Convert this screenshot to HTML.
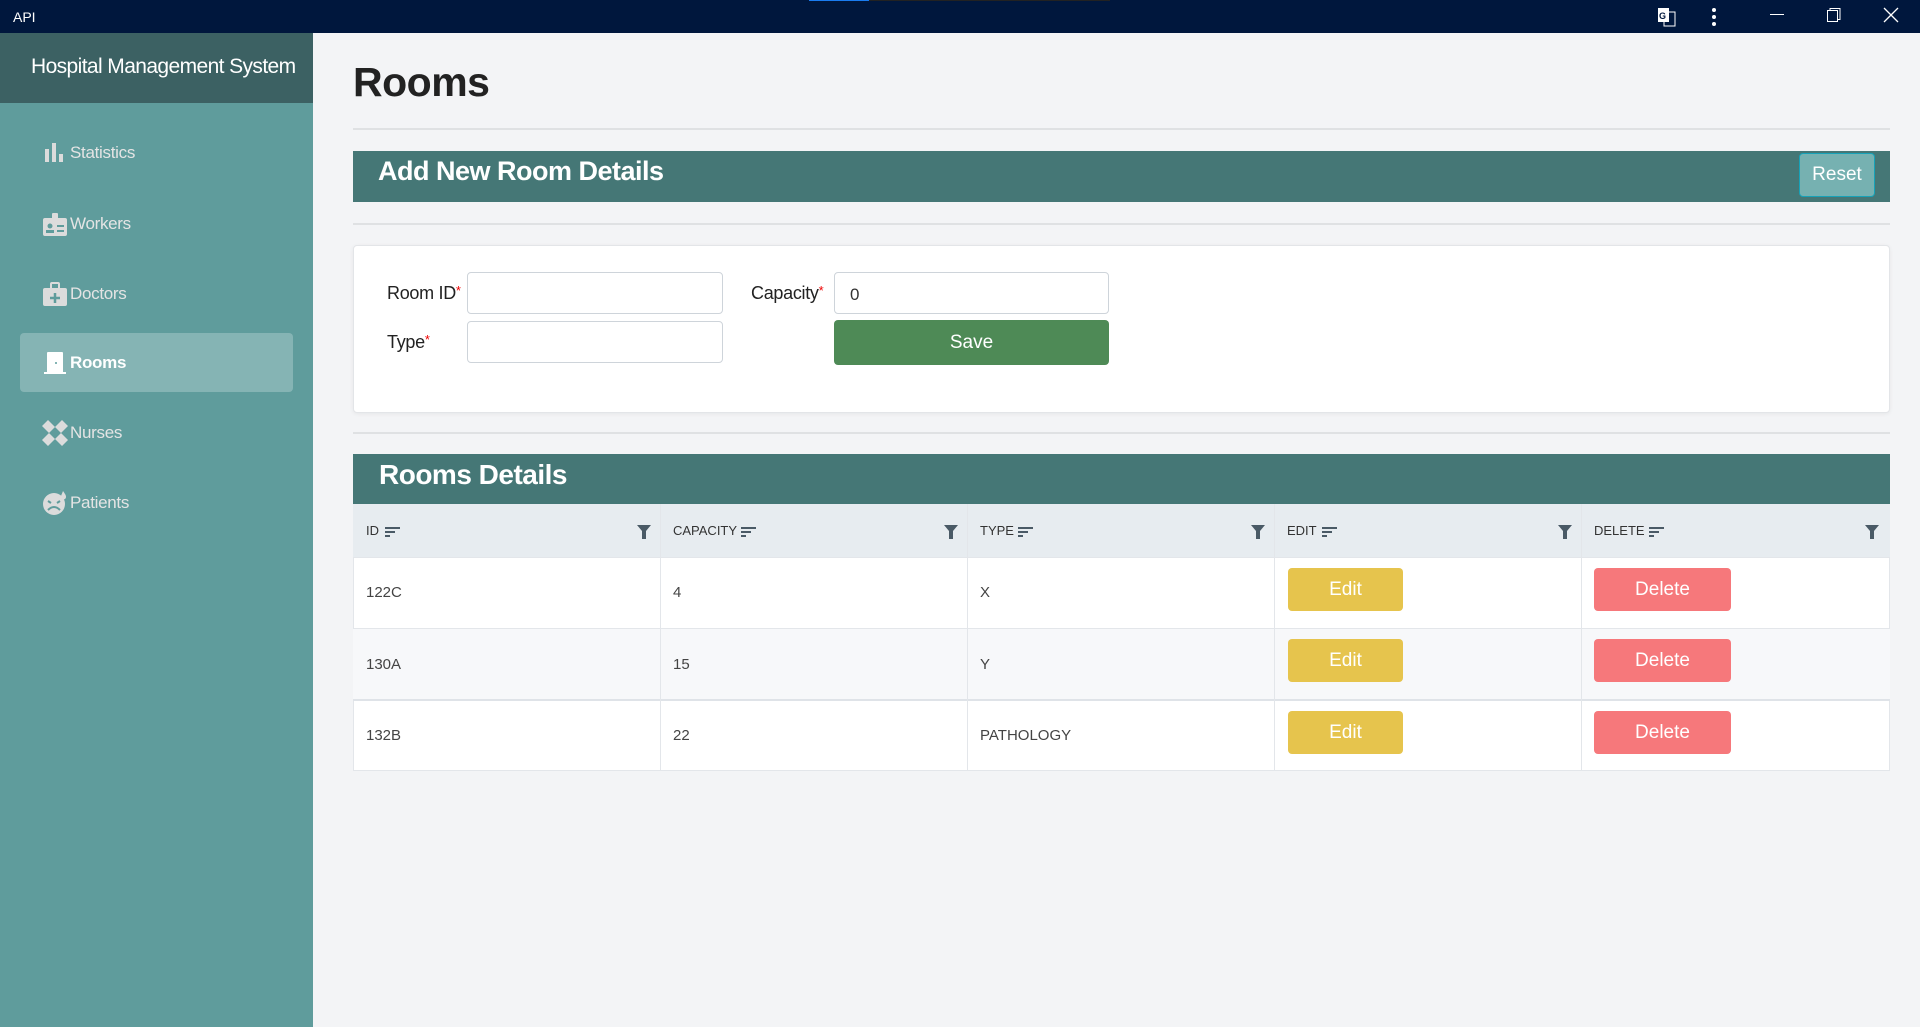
<!DOCTYPE html>
<html><head><meta charset="utf-8">
<style>
*{box-sizing:border-box;margin:0;padding:0}
body{width:1920px;height:1027px;overflow:hidden;background:#f3f4f6;font-family:"Liberation Sans",sans-serif;position:relative}
.abs{position:absolute}
.tb{left:0;top:0;width:1920px;height:33px;background:#00173d;color:#fff}
.side{left:0;top:33px;width:313px;height:994px;background:#5f9c9c}
.sh{left:0;top:33px;width:313px;height:70px;background:#3c6163;color:#fff;font-size:21px;padding:22px 0 0 31px;white-space:nowrap;letter-spacing:-0.6px}
.mi{left:20px;width:273px;height:59px;border-radius:4px;color:#e4e4e4;font-size:17px;display:flex;align-items:center;padding-left:22px;letter-spacing:-0.3px}
.mi svg{width:26px;height:26px;margin-right:2px;fill:#dcdcdc}
.mi.act{background:#85b4b4;color:#fff;font-weight:bold}
.hr{left:353px;width:1537px;height:2px;background:#dfe1e3}
.band{left:353px;width:1537px;background:#457776;color:#fff;font-weight:bold;letter-spacing:-0.5px;white-space:nowrap}
.lbl{font-size:18px;color:#222;letter-spacing:-0.3px}
.lbl b{color:#e00;font-weight:normal;font-size:13px;vertical-align:top}
.inp{background:#fff;border:1px solid #ced4da;border-radius:4px;height:42px}
.cell{position:absolute;font-size:15px;color:#444;display:flex;align-items:center;padding-left:13px}
.hd{font-size:13px;color:#333}
.btn{position:absolute;border-radius:4px;color:#fff;font-size:19px;display:flex;align-items:center;justify-content:center;height:43px}
.ed{background:#e6c44d;width:115px}
.de{background:#f6787b;width:137px}
</style></head><body>
<div class="abs tb"><span style="position:absolute;left:13px;top:9px;font-size:14px">API</span>
<div style="position:absolute;left:809px;top:0;width:60px;height:1px;background:#1a7cf0"></div>
<div style="position:absolute;left:869px;top:0;width:241px;height:1px;background:#222"></div>
<svg style="position:absolute;left:1657px;top:7px" width="20" height="20" viewBox="0 0 20 20"><rect x="1" y="1" width="11" height="14" fill="#fff"/><rect x="7" y="5" width="11" height="14" fill="none" stroke="#fff"/><text x="2" y="12" font-size="9" font-family="Liberation Sans" font-weight="bold" fill="#00173d">G</text></svg>
<svg style="position:absolute;left:1710px;top:7px" width="8" height="20"><circle cx="4" cy="3" r="2" fill="#fff"/><circle cx="4" cy="10" r="2" fill="#fff"/><circle cx="4" cy="17" r="2" fill="#fff"/></svg>
<div style="position:absolute;left:1770px;top:14px;width:14px;height:1px;background:#fff"></div>
<svg style="position:absolute;left:1826px;top:7px" width="16" height="16"><rect x="1.5" y="3.5" width="10" height="11" fill="none" stroke="#fff"/><path d="M4 3.5V1.5h10v11h-2.5" fill="none" stroke="#fff"/></svg>
<svg style="position:absolute;left:1883px;top:7px" width="16" height="16"><path d="M1 1L15 15M15 1L1 15" stroke="#fff" stroke-width="1.3"/></svg>
</div>
<div class="abs side"></div>
<div class="abs sh">Hospital Management System</div>
<div class="abs mi" style="top:123px"><svg viewBox="0 0 26 26"><rect x="3" y="9" width="4" height="13"/><rect x="10" y="3" width="4" height="19"/><rect x="17" y="14" width="4" height="8"/></svg>Statistics</div>
<div class="abs mi" style="top:194px"><svg viewBox="0 0 26 26"><rect x="1" y="7" width="24" height="18" rx="2"/><rect x="10" y="2" width="6" height="8" rx="1"/><circle cx="8" cy="15" r="2.5" fill="#5f9c9c"/><rect x="4" y="19" width="8" height="3" fill="#5f9c9c"/><rect x="15" y="14" width="7" height="2" fill="#5f9c9c"/><rect x="15" y="19" width="7" height="2" fill="#5f9c9c"/></svg>Workers</div>
<div class="abs mi" style="top:264px"><svg viewBox="0 0 26 26"><rect x="1" y="7" width="24" height="18" rx="2"/><rect x="9" y="2" width="8" height="7" rx="1" fill="none" stroke="#dcdcdc" stroke-width="2"/><path d="M13 12v10M8 17h10" stroke="#5f9c9c" stroke-width="2.5"/></svg>Doctors</div>
<div class="abs mi act" style="top:333px"><svg viewBox="0 0 26 26" style="fill:#fff"><rect x="5" y="2" width="16" height="21" rx="1"/><rect x="2" y="22" width="22" height="2"/><rect x="13" y="12" width="2" height="2" fill="#85b4b4"/></svg>Rooms</div>
<div class="abs mi" style="top:403px"><svg viewBox="0 0 26 26"><path d="M6 0L0 6l20 20 6-6z M20 0l6 6L6 26l-6-6z"/><circle cx="13" cy="13" r="3" fill="#5f9c9c"/></svg>Nurses</div>
<div class="abs mi" style="top:473px"><svg viewBox="0 0 26 26"><circle cx="12" cy="14" r="11"/><path d="M21 1c2 3 3 4 3 6a2.5 2.5 0 0 1-5 0c0-2 1-3 2-6z"/><path d="M6 20q6-6 12 0M6 11l3 2M18 11l-3 2" stroke="#5f9c9c" stroke-width="2" fill="none"/></svg>Patients</div>

<div class="abs" style="left:353px;top:59px;font-size:41px;font-weight:bold;color:#222;letter-spacing:-0.5px">Rooms</div>
<div class="abs hr" style="top:128px"></div>
<div class="abs band" style="top:151px;height:51px;font-size:27px;padding:5px 0 0 25px">Add New Room Details</div>
<div class="abs" style="left:1799px;top:153px;width:76px;height:44px;background:#76b1b1;border:1px solid #17a2b8;border-radius:4px;color:#fff;font-size:19px;display:flex;align-items:center;justify-content:center">Reset</div>
<div class="abs hr" style="top:223px"></div>
<div class="abs" style="left:353px;top:245px;width:1537px;height:168px;background:#fff;border:1px solid #e3e5e8;border-radius:4px;box-shadow:0 1px 4px rgba(0,0,0,.06)"></div>
<div class="abs lbl" style="left:387px;top:283px">Room ID<b>*</b></div>
<div class="abs lbl" style="left:387px;top:332px">Type<b>*</b></div>
<div class="abs lbl" style="left:751px;top:283px">Capacity<b>*</b></div>
<div class="abs inp" style="left:467px;top:272px;width:256px"></div>
<div class="abs inp" style="left:467px;top:321px;width:256px"></div>
<div class="abs inp" style="left:834px;top:272px;width:275px;font-size:17px;padding:12px 0 0 15px;color:#333">0</div>
<div class="abs" style="left:834px;top:320px;width:275px;height:45px;background:#4e8a56;border-radius:4px;color:#fff;font-size:19px;display:flex;align-items:center;justify-content:center">Save</div>
<div class="abs hr" style="top:432px"></div>
<div class="abs band" style="top:454px;height:50px;font-size:28px;padding:5px 0 0 26px">Rooms Details</div>

<div class="abs" style="left:353px;top:504px;width:1537px;height:267px;background:#fff;border:1px solid #e3e6ea"></div>
<div class="abs" style="left:353px;top:504px;width:1537px;height:53px;background:#e7ecf0"></div>
<div class="abs" style="left:353px;top:628px;width:1537px;height:72px;background:#f7f8fa"></div>
<div class="abs" style="left:353px;top:628px;width:1537px;height:1px;background:#e3e6ea"></div>
<div class="abs" style="left:353px;top:699px;width:1537px;height:2px;background:#dfe3e8"></div>
<div class="abs" style="left:353px;top:557px;width:1537px;height:1px;background:#e3e6ea"></div>
<div class="abs" style="left:660px;top:504px;width:1px;height:267px;background:#e3e6ea"></div>
<div class="abs" style="left:967px;top:504px;width:1px;height:267px;background:#e3e6ea"></div>
<div class="abs" style="left:1274px;top:504px;width:1px;height:267px;background:#e3e6ea"></div>
<div class="abs" style="left:1581px;top:504px;width:1px;height:267px;background:#e3e6ea"></div>

<div class="cell hd" style="left:353px;top:504px;height:53px">ID</div>
<div class="cell hd" style="left:660px;top:504px;height:53px">CAPACITY</div>
<div class="cell hd" style="left:967px;top:504px;height:53px">TYPE</div>
<div class="cell hd" style="left:1274px;top:504px;height:53px">EDIT</div>
<div class="cell hd" style="left:1581px;top:504px;height:53px">DELETE</div>
<svg class="abs" style="left:385px;top:527px" width="16" height="10"><path d="M0 1h15M0 5h10M0 9h5" stroke="#4a5a66" stroke-width="2"/></svg>
<svg class="abs" style="left:741px;top:527px" width="16" height="10"><path d="M0 1h15M0 5h10M0 9h5" stroke="#4a5a66" stroke-width="2"/></svg>
<svg class="abs" style="left:1018px;top:527px" width="16" height="10"><path d="M0 1h15M0 5h10M0 9h5" stroke="#4a5a66" stroke-width="2"/></svg>
<svg class="abs" style="left:1322px;top:527px" width="16" height="10"><path d="M0 1h15M0 5h10M0 9h5" stroke="#4a5a66" stroke-width="2"/></svg>
<svg class="abs" style="left:1649px;top:527px" width="16" height="10"><path d="M0 1h15M0 5h10M0 9h5" stroke="#4a5a66" stroke-width="2"/></svg>
<svg class="abs" style="left:637px;top:525px" width="14" height="14"><path d="M0 0h14L9 6v8H5V6z" fill="#4a5a66"/></svg>
<svg class="abs" style="left:944px;top:525px" width="14" height="14"><path d="M0 0h14L9 6v8H5V6z" fill="#4a5a66"/></svg>
<svg class="abs" style="left:1251px;top:525px" width="14" height="14"><path d="M0 0h14L9 6v8H5V6z" fill="#4a5a66"/></svg>
<svg class="abs" style="left:1558px;top:525px" width="14" height="14"><path d="M0 0h14L9 6v8H5V6z" fill="#4a5a66"/></svg>
<svg class="abs" style="left:1865px;top:525px" width="14" height="14"><path d="M0 0h14L9 6v8H5V6z" fill="#4a5a66"/></svg>

<div class="cell" style="left:353px;top:557px;height:71px">122C</div>
<div class="cell" style="left:660px;top:557px;height:71px">4</div>
<div class="cell" style="left:967px;top:557px;height:71px">X</div>
<div class="cell" style="left:353px;top:628px;height:72px">130A</div>
<div class="cell" style="left:660px;top:628px;height:72px">15</div>
<div class="cell" style="left:967px;top:628px;height:72px">Y</div>
<div class="cell" style="left:353px;top:700px;height:71px">132B</div>
<div class="cell" style="left:660px;top:700px;height:71px">22</div>
<div class="cell" style="left:967px;top:700px;height:71px">PATHOLOGY</div>

<div class="btn ed" style="left:1288px;top:568px">Edit</div>
<div class="btn de" style="left:1594px;top:568px">Delete</div>
<div class="btn ed" style="left:1288px;top:639px">Edit</div>
<div class="btn de" style="left:1594px;top:639px">Delete</div>
<div class="btn ed" style="left:1288px;top:711px">Edit</div>
<div class="btn de" style="left:1594px;top:711px">Delete</div>
</body></html>
